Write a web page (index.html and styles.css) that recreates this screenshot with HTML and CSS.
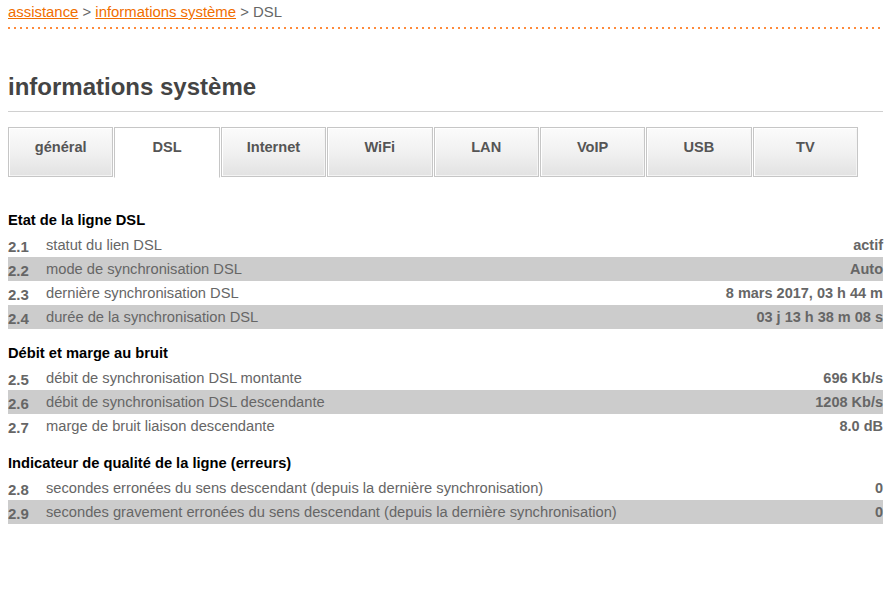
FILE: index.html
```html
<!DOCTYPE html>
<html lang="fr">
<head>
<meta charset="utf-8">
<title>informations système</title>
<link rel="stylesheet" href="styles.css">
</head>
<body>
<div class="page">
  <div class="breadcrumb">
    <a href="#">assistance</a> &gt; <a href="#">informations système</a> &gt; DSL
  </div>
  <div class="dots"></div>
  <h1 class="title">informations système</h1>
  <div class="rule"></div>
  <nav class="tabs">
    <a class="tab" href="#">général</a>
    <a class="tab active" href="#">DSL</a>
    <a class="tab" href="#">Internet</a>
    <a class="tab" href="#">WiFi</a>
    <a class="tab" href="#">LAN</a>
    <a class="tab" href="#">VoIP</a>
    <a class="tab" href="#">USB</a>
    <a class="tab" href="#">TV</a>
  </nav>

  <section class="section">
    <h2 class="section-title">Etat de la ligne DSL</h2>
    <div class="row"><span class="num">2.1</span><span class="label">statut du lien DSL</span><span class="value">actif</span></div>
    <div class="row alt"><span class="num">2.2</span><span class="label">mode de synchronisation DSL</span><span class="value">Auto</span></div>
    <div class="row"><span class="num">2.3</span><span class="label">dernière synchronisation DSL</span><span class="value">8 mars 2017, 03 h 44 m</span></div>
    <div class="row alt"><span class="num">2.4</span><span class="label">durée de la synchronisation DSL</span><span class="value">03 j 13 h 38 m 08 s</span></div>
  </section>

  <section class="section">
    <h2 class="section-title">Débit et marge au bruit</h2>
    <div class="row"><span class="num">2.5</span><span class="label">débit de synchronisation DSL montante</span><span class="value">696 Kb/s</span></div>
    <div class="row alt"><span class="num">2.6</span><span class="label">débit de synchronisation DSL descendante</span><span class="value">1208 Kb/s</span></div>
    <div class="row"><span class="num">2.7</span><span class="label">marge de bruit liaison descendante</span><span class="value">8.0 dB</span></div>
  </section>

  <section class="section last">
    <h2 class="section-title">Indicateur de qualité de la ligne (erreurs)</h2>
    <div class="row"><span class="num">2.8</span><span class="label">secondes erronées du sens descendant (depuis la dernière synchronisation)</span><span class="value">0</span></div>
    <div class="row alt"><span class="num">2.9</span><span class="label">secondes gravement erronées du sens descendant (depuis la dernière synchronisation)</span><span class="value">0</span></div>
  </section>
</div>
</body>
</html>
```

FILE: styles.css
```css
* { box-sizing: border-box; }
html, body { margin: 0; padding: 0; background: #fff; }
body {
  font-family: "Liberation Sans", Arial, sans-serif;
  font-size: 14.7px;
  color: #666;
}
.page {
  width: 875px;
  margin-left: 8px;
}
.breadcrumb {
  height: 24px;
  line-height: 24px;
  font-size: 14.9px;
  color: #666;
}
.breadcrumb a {
  color: #f16e00;
  text-decoration: underline;
}
.dots {
  height: 2px;
  margin-top: 3px;
  margin-right: 2px;
  background-image: repeating-linear-gradient(to right, #ff8a3a 0, #ff8a3a 2px, transparent 2px, transparent 6px);
}
.title {
  margin: 44px 0 0 0;
  font-size: 24px;
  line-height: 28px;
  font-weight: bold;
  color: #444;
}
.rule {
  height: 1px;
  background: #d0d0d0;
  margin-top: 10px;
}
.tabs {
  display: flex;
  gap: 1px;
  width: 850px;
  margin-top: 15px;
  margin-bottom: 30px;
}
.tab {
  flex: 1;
  height: 50px;
  padding-top: 10px;
  text-align: center;
  font-weight: bold;
  font-size: 14.6px;
  line-height: 18px;
  color: #555;
  text-decoration: none;
  border: 1px solid #c6c6c6;
  background: linear-gradient(to bottom, #fbfbfb 0%, #f1f1f1 50%, #e2e2e2 100%);
  box-shadow: inset 1px 1px 0 #fff, inset -1px -1px 0 #f4f4f4;
}
.tab.active {
  background: #fff;
  border-bottom-color: #fff;
  box-shadow: none;
  height: 51px;
}
.section { margin-top: 12px; }
.section.last { margin-top: 13px; }
.section-title {
  margin: 0;
  height: 25px;
  line-height: 25px;
  font-size: 14.7px;
  font-weight: bold;
  color: #000;
}
.row {
  display: flex;
  align-items: center;
  height: 24px;
}
.row.alt { background: #cccccc; }
.num {
  width: 38px;
  flex: none;
  font-weight: bold;
  color: #666;
  padding-top: 2px;
  font-size: 15px;
}
.label {
  flex: 1;
  color: #666;
}
.value {
  font-weight: bold;
  font-size: 14.5px;
  color: #666;
  text-align: right;
}
```
